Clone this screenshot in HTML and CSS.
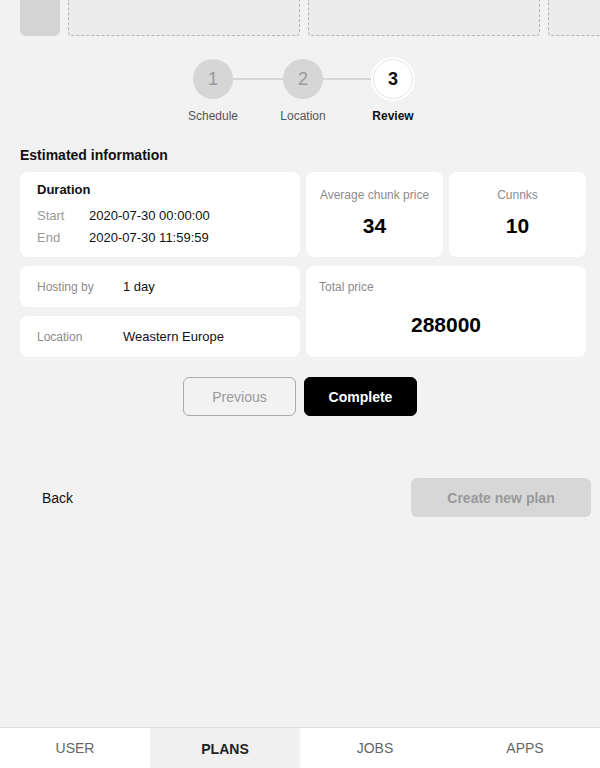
FILE: index.html
```html
<!DOCTYPE html>
<html>
<head>
<meta charset="utf-8">
<link rel="stylesheet" href="styles.css">
</head>
<body>
<div class="app">
  <div class="strip">
    <div class="tile"></div>
    <div class="slot"></div>
    <div class="slot"></div>
    <div class="slot"></div>
  </div>

  <div class="content">
    <div class="stepper">
      <div class="step">
        <div class="circle">1</div>
        <div class="step-label">Schedule</div>
      </div>
      <div class="line"></div>
      <div class="step">
        <div class="circle">2</div>
        <div class="step-label">Location</div>
      </div>
      <div class="line"></div>
      <div class="step active">
        <div class="circle">3</div>
        <div class="step-label">Review</div>
      </div>
    </div>

    <h2 class="title">Estimated information</h2>

    <div class="grid">
      <div class="card duration">
        <div class="card-title">Duration</div>
        <div class="kv first"><span class="k">Start</span><span class="v">2020-07-30 00:00:00</span></div>
        <div class="kv"><span class="k">End</span><span class="v">2020-07-30 11:59:59</span></div>
      </div>
      <div class="card stat">
        <div class="stat-label">Average chunk price</div>
        <div class="stat-value">34</div>
      </div>
      <div class="card stat">
        <div class="stat-label">Cunnks</div>
        <div class="stat-value">10</div>
      </div>
      <div class="left-col">
        <div class="card row"><span class="rk">Hosting by</span><span class="rv">1 day</span></div>
        <div class="card row"><span class="rk">Location</span><span class="rv">Weastern Europe</span></div>
      </div>
      <div class="card total">
        <div class="total-label">Total price</div>
        <div class="total-value">288000</div>
      </div>
    </div>
  </div>

  <div class="actions">
    <button class="btn prev">Previous</button>
    <button class="btn complete">Complete</button>
  </div>

  <div class="footer-row">
    <button class="back">Back</button>
    <button class="create">Create new plan</button>
  </div>

  <nav class="tabs">
    <div class="tab">USER</div>
    <div class="tab active">PLANS</div>
    <div class="tab">JOBS</div>
    <div class="tab">APPS</div>
  </nav>
</div>
</body>
</html>
```

FILE: styles.css
```css
* { box-sizing: border-box; }
html, body { margin: 0; padding: 0; }
body {
  background: #f2f2f2;
  font-family: "Liberation Sans", Arial, sans-serif;
  color: #111;
}
.app {
  width: 600px;
  height: 768px;
  display: flex;
  flex-direction: column;
  overflow: hidden;
}
.strip {
  display: flex;
  gap: 8px;
  padding-left: 20px;
  height: 36px;
  overflow: hidden;
  flex-shrink: 0;
}
.tile {
  flex: 0 0 40px;
  height: 36px;
  background: #d4d4d4;
  border-radius: 0 0 6px 6px;
}
.slot {
  flex: 0 0 232px;
  height: 36px;
  background: #ececec;
  border: 1px dashed #b4b4b4;
  border-top: none;
  border-radius: 0 0 4px 4px;
}
.content {
  padding: 0 14px 0 20px;
}
.stepper {
  display: flex;
  justify-content: center;
  align-items: flex-start;
  margin-top: 23px;
}
.step {
  width: 40px;
  display: flex;
  flex-direction: column;
  align-items: center;
}
.circle {
  width: 40px;
  height: 40px;
  border-radius: 50%;
  background: #d6d6d6;
  color: #9a9a9a;
  font-size: 18px;
  display: flex;
  align-items: center;
  justify-content: center;
}
.step.active .circle {
  background: #fff;
  color: #111;
  font-weight: bold;
  border: 1px solid #e4e4e4;
  box-shadow: 0 0 0 2px #fff;
}
.step-label {
  margin-top: 10px;
  font-size: 12px;
  line-height: 14px;
  color: #555;
  white-space: nowrap;
}
.step.active .step-label {
  color: #111;
  font-weight: bold;
}
.line {
  width: 50px;
  height: 2px;
  background: #d6d6d6;
  margin-top: 19px;
}
.title {
  margin: 24px 0 0;
  font-size: 14px;
  line-height: 16px;
  font-weight: bold;
  color: #111;
}
.grid {
  margin-top: 9px;
  display: grid;
  grid-template-columns: 280px 137px 137px;
  grid-template-rows: 85px 91px;
  column-gap: 6px;
  row-gap: 9px;
}
.card {
  background: #fff;
  border-radius: 8px;
}
.duration {
  padding: 11px 17px 10px;
}
.card-title {
  font-size: 13px;
  font-weight: bold;
  line-height: 14px;
  color: #111;
}
.kv {
  display: flex;
  font-size: 13px;
  line-height: 22px;
}
.kv.first { margin-top: 8px; }
.k {
  width: 52px;
  color: #999;
}
.v { color: #111; }
.stat {
  text-align: center;
  padding-top: 16px;
}
.stat-label {
  font-size: 12px;
  line-height: 14px;
  color: #8c8c8c;
}
.stat-value {
  margin-top: 12px;
  font-size: 21px;
  line-height: 24px;
  font-weight: bold;
  color: #000;
}
.left-col {
  display: flex;
  flex-direction: column;
  gap: 9px;
}
.row {
  height: 41px;
  display: flex;
  align-items: center;
  padding-left: 17px;
}
.rk {
  width: 86px;
  font-size: 12px;
  color: #8c8c8c;
}
.rv {
  font-size: 13px;
  color: #111;
}
.total {
  grid-column: 2 / span 2;
  padding: 14px 13px 0;
}
.total-label {
  font-size: 12px;
  line-height: 14px;
  color: #8c8c8c;
}
.total-value {
  margin-top: 19px;
  text-align: center;
  font-size: 21px;
  line-height: 24px;
  font-weight: bold;
  color: #000;
}
.actions {
  display: flex;
  justify-content: center;
  gap: 8px;
  margin-top: 20px;
}
.btn {
  width: 113px;
  height: 39px;
  border-radius: 6px;
  font-family: inherit;
  font-size: 14px;
  cursor: pointer;
}
.prev {
  background: transparent;
  border: 1px solid #aaa;
  color: #999;
}
.complete {
  background: #000;
  border: 1px solid #000;
  color: #fff;
  font-weight: bold;
}
.footer-row {
  display: flex;
  justify-content: space-between;
  align-items: center;
  margin-top: 62px;
  padding: 0 9px 0 0;
}
.back {
  background: none;
  border: none;
  font-family: inherit;
  font-size: 14px;
  color: #111;
  padding: 0 0 0 42px;
}
.create {
  width: 180px;
  height: 39px;
  border: none;
  border-radius: 6px;
  background: #d7d7d7;
  color: #999;
  font-family: inherit;
  font-size: 14px;
  font-weight: bold;
}
.tabs {
  margin-top: auto;
  display: flex;
  border-top: 1px solid #dcdcdc;
  height: 41px;
  flex-shrink: 0;
}
.tab {
  flex: 1;
  background: #fff;
  display: flex;
  align-items: center;
  justify-content: center;
  font-size: 14px;
  color: #666;
}
.tab.active {
  background: #f0f0f0;
  color: #222;
  font-weight: bold;
  padding-top: 2px;
}
```
